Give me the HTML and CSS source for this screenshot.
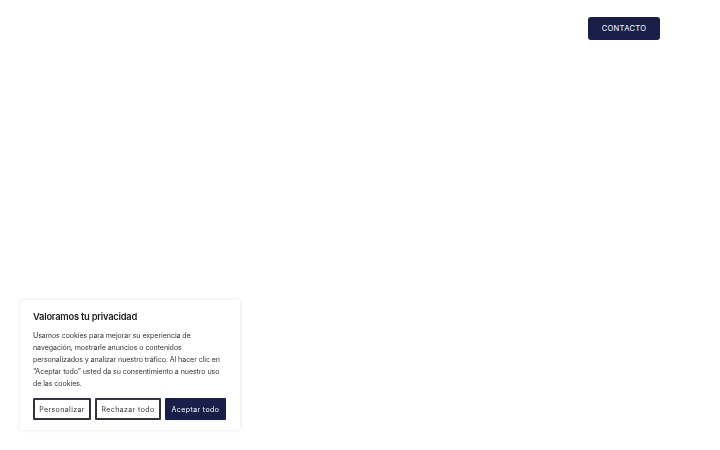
FILE: index.html
```html
<!DOCTYPE html>
<html lang="es">
<head>
<meta charset="utf-8">
<title>Inicio</title>
<link rel="stylesheet" href="styles.css">
</head>
<body>
<header class="site-header">
  <a class="btn-contact" href="#">CONTACTO</a>
</header>
<main class="page"></main>
<div class="cookie-banner">
  <p class="cookie-title">Valoramos tu privacidad</p>
  <p class="cookie-text">Usamos cookies para mejorar su experiencia de navegación, mostrarle anuncios o contenidos personalizados y analizar nuestro tráfico. Al hacer clic en “Aceptar todo” usted da su consentimiento a nuestro uso de las cookies.</p>
  <div class="cookie-actions">
    <button class="cbtn cbtn-outline btn-custom">Personalizar</button>
    <button class="cbtn cbtn-outline btn-reject">Rechazar todo</button>
    <button class="cbtn cbtn-solid btn-accept">Aceptar todo</button>
  </div>
</div>
</body>
</html>
```
FILE: styles.css
```css
html, body {
  margin: 0;
  padding: 0;
  background: #ffffff;
  font-family: "Inter", "Noto Sans", sans-serif;
  color: #212121;
}
.site-header {
  display: flex;
  justify-content: flex-end;
  padding: 17px 60px 0 0;
}
.btn-contact {
  display: flex;
  align-items: center;
  justify-content: center;
  width: 72px;
  height: 23px;
  box-sizing: border-box;
  background: #1a1f4a;
  color: #ffffff;
  border-radius: 3px;
  font-size: 7.6px;
  letter-spacing: 0.3px;
  text-decoration: none;
}
.cookie-banner {
  position: fixed;
  left: 20px;
  top: 300px;
  width: 220px;
  height: 130px;
  box-sizing: border-box;
  padding: 11px 13px 11px 13px;
  background: #ffffff;
  border-radius: 3px;
  box-shadow: 0 0 4px rgba(0, 0, 0, 0.12);
}
.cookie-title {
  margin: 0 0 7px 0;
  font-size: 9.4px;
  font-weight: 600;
  line-height: 12px;
  color: #212121;
  letter-spacing: -0.25px;
}
.cookie-text {
  margin: 0 0 8px 0;
  font-size: 7.1px;
  line-height: 12px;
  color: #333333;
  letter-spacing: -0.08px;
}
.cookie-actions {
  display: flex;
  gap: 4px;
}
.cbtn {
  height: 22px;
  box-sizing: border-box;
  padding: 0;
  font-family: inherit;
  font-size: 7px;
  letter-spacing: 0.4px;
  border-radius: 1px;
}
.cbtn-outline {
  background: #ffffff;
  color: #333333;
  border: 2px solid #333340;
}
.cbtn-solid {
  background: #1a1f4a;
  color: #ffffff;
  border: 2px solid #1a1f4a;
}
.btn-custom { width: 58px; }
.btn-reject { width: 66px; }
.btn-accept { width: 61px; }
```
